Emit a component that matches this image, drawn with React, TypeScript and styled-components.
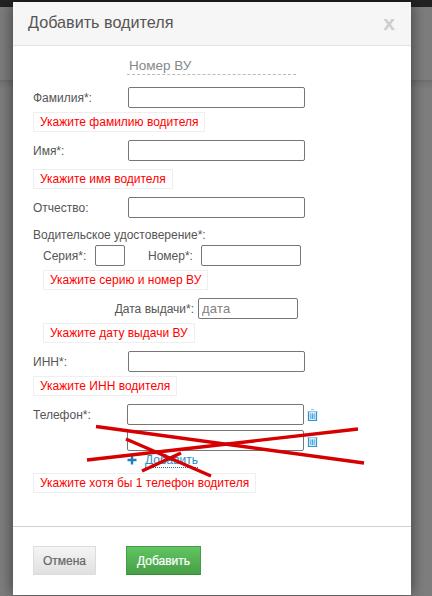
import React from "react";
import styled, { createGlobalStyle } from "styled-components";

const Global = createGlobalStyle`
  html, body { margin: 0; padding: 0; height: 100%; overflow: hidden; }
  body { font-family: "Liberation Sans", Arial, sans-serif; }
  #root { height: 100%; }
`;

const Page = styled.div`
  position: relative;
  width: 432px;
  height: 596px;
  overflow: hidden;
  display: flex;
  flex-direction: column;
  background: #7c7c7c;
`;
const TopBar = styled.div`
  height: 7px;
  background: #232323;
`;
const Band = styled.div`
  height: 73px;
  background: #7d7d7d;
  border-bottom: 1px solid #6e6e6e;
`;
const Rest = styled.div`
  flex: 1;
  background: linear-gradient(#727272, #7e7e7e 8px);
`;
const Modal = styled.div`
  position: absolute;
  left: 13px;
  top: 2px;
  width: 398px;
  height: 593px;
  background: #fff;
  box-shadow: 0 0 14px rgba(0, 0, 0, 0.55);
  display: flex;
  flex-direction: column;
`;
const Header = styled.div`
  height: 44px;
  box-sizing: border-box;
  background: #f6f6f6;
  border-bottom: 1px solid #e2e2e2;
  display: flex;
  align-items: center;
  justify-content: space-between;
  padding: 0 16px 2px 15px;
`;
const Title = styled.div`
  font-size: 16.2px;
  color: #555;
`;
const Close = styled.div`
  font-size: 21px;
  line-height: 21px;
  font-weight: bold;
  color: #cdcdcd;
`;
const Body = styled.div`
  height: 481px;
  box-sizing: border-box;
  padding-left: 20px;
  border-bottom: 1px solid #d0d0d0;
  font-size: 12px;
  color: #555;
`;
const Tab = styled.div`
  width: 169px;
  height: 29px;
  box-sizing: border-box;
  margin-left: 94px;
  padding: 12px 0 0 2px;
  border-bottom: 1px dashed #bbb;
  font-size: 13.5px;
  line-height: 16px;
  color: #888;
`;
const Row = styled.div<{ $top: number; $indent?: number }>`
  display: flex;
  align-items: center;
  margin-top: ${(p) => p.$top}px;
  margin-left: ${(p) => p.$indent ?? 0}px;
`;
const Label = styled.label<{ $width?: number; $right?: boolean; $gap?: number }>`
  width: ${(p) => p.$width ?? 95}px;
  flex: none;
  margin-left: ${(p) => p.$gap ?? 0}px;
  ${(p) => (p.$right ? "text-align: right; padding-right: 4px; box-sizing: border-box;" : "")}
`;
const Input = styled.input<{ $width?: number }>`
  width: ${(p) => p.$width ?? 177}px;
  height: 21px;
  box-sizing: border-box;
  padding: 0 3px;
  border: 1px solid #767676;
  border-radius: 2px;
  background: #fff;
  outline: none;
  font-family: inherit;
  font-size: 13px;
  letter-spacing: 0.2px;
  flex: none;
  &::placeholder { color: #808080; opacity: 1; }
`;
const Error = styled.div<{ $top: number; $indent?: number }>`
  display: table;
  height: 20px;
  box-sizing: border-box;
  margin-top: ${(p) => p.$top}px;
  margin-left: ${(p) => p.$indent ?? 0}px;
  padding: 0 6px;
  border: 1px solid #efefef;
  font-size: 12px;
  line-height: 18px;
  color: #f00;
  background: #fff;
`;
const Heading = styled.div`
  margin-top: 10px;
  line-height: 14px;
`;
const Trash = styled.svg`
  width: 11px;
  height: 12px;
  margin-left: 3px;
  flex: none;
`;
const AddRow = styled.div`
  display: flex;
  align-items: center;
  margin: 1px 0 0 94px;
  height: 16px;
`;
const Plus = styled.svg`
  width: 10px;
  height: 10px;
  margin-right: 8px;
`;
const AddLink = styled.a`
  color: #2a8cc4;
  font-size: 12px;
  line-height: 14px;
  border-bottom: 1px dotted #1d6f9f;
`;
const Footer = styled.div`
  display: flex;
  padding: 19px 0 0 20px;
`;
const Button = styled.button<{ $primary?: boolean }>`
  height: 29px;
  width: ${(p) => (p.$primary ? 75 : 63)}px;
  margin-right: 30px;
  padding: 0;
  box-sizing: border-box;
  font-family: inherit;
  font-size: 12px;
  color: ${(p) => (p.$primary ? "#fff" : "#666")};
  -webkit-text-stroke: ${(p) => (p.$primary ? "0.2px #fff" : "0.2px #666")};
  border: 1px solid ${(p) => (p.$primary ? "#479a47" : "#dcdcdc")};
  border-bottom-color: ${(p) => (p.$primary ? "#3c8a3c" : "#dcdcdc")};
  background: ${(p) =>
    p.$primary
      ? "linear-gradient(#62c462, #469f46)"
      : "linear-gradient(#f5f5f5, #e0e0e0)"};
`;
const Annotation = styled.svg`
  position: absolute;
  left: 0;
  top: 0;
  width: 432px;
  height: 596px;
  pointer-events: none;
`;

const TrashIcon = () => (
  <Trash viewBox="0 0 11 12">
    <path d="M4 0.5h3M0.5 2.5h10" stroke="#8fc6e8" strokeWidth="1" fill="none" />
    <path d="M1.5 3v8.5h8V3" stroke="#2c95d6" strokeWidth="1.2" fill="#d8ecf8" />
    <path d="M3.8 4.5v5.5M5.5 4.5v5.5M7.2 4.5v5.5" stroke="#4aa5de" strokeWidth="1" />
  </Trash>
);

export default function App() {
  return (
    <>
      <Global />
      <Page>
        <TopBar />
        <Band />
        <Rest />
        <Modal>
          <Header>
            <Title>Добавить водителя</Title>
            <Close>x</Close>
          </Header>
          <Body>
            <Tab>Номер ВУ</Tab>
            <Row $top={12}>
              <Label>Фамилия*:</Label>
              <Input />
            </Row>
            <Error $top={4}>Укажите фамилию водителя</Error>
            <Row $top={8}>
              <Label>Имя*:</Label>
              <Input />
            </Row>
            <Error $top={8}>Укажите имя водителя</Error>
            <Row $top={8}>
              <Label>Отчество:</Label>
              <Input />
            </Row>
            <Heading>Водительское удостоверение*:</Heading>
            <Row $top={3} $indent={10}>
              <Label $width={52}>Серия*:</Label>
              <Input $width={30} />
              <Label $width={53} $gap={23}>Номер*:</Label>
              <Input $width={100} />
            </Row>
            <Error $top={4} $indent={10}>Укажите серию и номер ВУ</Error>
            <Row $top={8} $indent={10}>
              <Label $width={155} $right>Дата выдачи*:</Label>
              <Input $width={100} placeholder="дата" />
            </Row>
            <Error $top={4} $indent={10}>Укажите дату выдачи ВУ</Error>
            <Row $top={8}>
              <Label>ИНН*:</Label>
              <Input />
            </Row>
            <Error $top={4}>Укажите ИНН водителя</Error>
            <Row $top={8}>
              <Label $width={94}>Телефон*:</Label>
              <Input />
              <TrashIcon />
            </Row>
            <Row $top={5}>
              <Label $width={94} />
              <Input />
              <TrashIcon />
            </Row>
            <AddRow>
              <Plus viewBox="0 0 10 10">
                <path d="M5 0.5v9M0.5 5h9" stroke="#1f7fbf" strokeWidth="2.4" />
              </Plus>
              <AddLink>Добавить</AddLink>
            </AddRow>
            <Error $top={5}>Укажите хотя бы 1 телефон водителя</Error>
          </Body>
          <Footer>
            <Button>Отмена</Button>
            <Button $primary>Добавить</Button>
          </Footer>
        </Modal>
        <Annotation viewBox="0 0 432 596">
          <g stroke="#d70000" strokeWidth="3.4" fill="none">
            <path d="M96 426.5L364 463" />
            <path d="M87 460L358 429" />
            <path d="M126 439L211 476" />
            <path d="M142 471L181 453" />
          </g>
        </Annotation>
      </Page>
    </>
  );
}
